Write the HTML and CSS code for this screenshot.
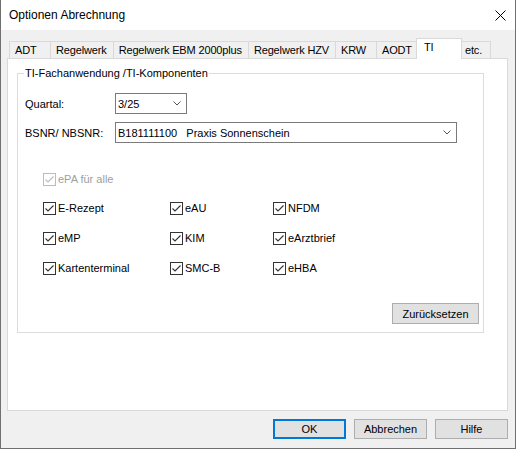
FILE: index.html
```html
<!DOCTYPE html>
<html lang="de">
<head>
    <meta charset="UTF-8">
    <meta name="viewport" content="width=device-width, initial-scale=1.0">
    <title>Optionen Abrechnung</title>
    <link rel="stylesheet" href="styles.css">
</head>
<body>
    <div class="window">
        <div class="titlebar">
            <span class="title">Optionen Abrechnung</span>
            <svg class="close" width="11" height="11" viewBox="0 0 11 11">
                <path d="M0.5 0.5 L10.5 10.5 M10.5 0.5 L0.5 10.5" stroke="#000" stroke-width="1" fill="none"/>
            </svg>
        </div>

        <div class="main">
            <div class="tabs">
                <div class="tab">ADT</div>
                <div class="tab">Regelwerk</div>
                <div class="tab">Regelwerk EBM 2000plus</div>
                <div class="tab">Regelwerk HZV</div>
                <div class="tab">KRW</div>
                <div class="tab">AODT</div>
                <div class="tab active">TI</div>
                <div class="tab narrow">etc.</div>
            </div>

            <div class="panel">
                <div class="group">
                    <span class="group-title">TI-Fachanwendung /TI-Komponenten</span>

                    <div class="field">
                        <label class="field-label">Quartal:</label>
                        <div class="combo combo-short">
                            <span class="combo-text">3/25</span>
                            <svg class="chevron" width="8" height="5" viewBox="0 0 8 5"><path d="M0.5 0.5 L4 4 L7.5 0.5" stroke="#555" fill="none"/></svg>
                        </div>
                    </div>

                    <div class="field">
                        <label class="field-label">BSNR/ NBSNR:</label>
                        <div class="combo combo-long">
                            <span class="combo-text">B181111100   Praxis Sonnenschein</span>
                            <svg class="chevron" width="8" height="5" viewBox="0 0 8 5"><path d="M0.5 0.5 L4 4 L7.5 0.5" stroke="#555" fill="none"/></svg>
                        </div>
                    </div>

                    <div class="check disabled all">
                        <span class="box"><svg width="11" height="11" viewBox="0 0 11 11"><path d="M1.5 5.5 L4 8 L9.5 2.5" fill="none"/></svg></span>
                        <span>ePA für alle</span>
                    </div>

                    <div class="check-grid">
                        <div class="check"><span class="box"><svg width="11" height="11" viewBox="0 0 11 11"><path d="M1.5 5.5 L4 8 L9.5 2.5" fill="none"/></svg></span><span>E-Rezept</span></div>
                        <div class="check"><span class="box"><svg width="11" height="11" viewBox="0 0 11 11"><path d="M1.5 5.5 L4 8 L9.5 2.5" fill="none"/></svg></span><span>eAU</span></div>
                        <div class="check"><span class="box"><svg width="11" height="11" viewBox="0 0 11 11"><path d="M1.5 5.5 L4 8 L9.5 2.5" fill="none"/></svg></span><span>NFDM</span></div>
                        <div class="check"><span class="box"><svg width="11" height="11" viewBox="0 0 11 11"><path d="M1.5 5.5 L4 8 L9.5 2.5" fill="none"/></svg></span><span>eMP</span></div>
                        <div class="check"><span class="box"><svg width="11" height="11" viewBox="0 0 11 11"><path d="M1.5 5.5 L4 8 L9.5 2.5" fill="none"/></svg></span><span>KIM</span></div>
                        <div class="check"><span class="box"><svg width="11" height="11" viewBox="0 0 11 11"><path d="M1.5 5.5 L4 8 L9.5 2.5" fill="none"/></svg></span><span>eArztbrief</span></div>
                        <div class="check"><span class="box"><svg width="11" height="11" viewBox="0 0 11 11"><path d="M1.5 5.5 L4 8 L9.5 2.5" fill="none"/></svg></span><span>Kartenterminal</span></div>
                        <div class="check"><span class="box"><svg width="11" height="11" viewBox="0 0 11 11"><path d="M1.5 5.5 L4 8 L9.5 2.5" fill="none"/></svg></span><span>SMC-B</span></div>
                        <div class="check"><span class="box"><svg width="11" height="11" viewBox="0 0 11 11"><path d="M1.5 5.5 L4 8 L9.5 2.5" fill="none"/></svg></span><span>eHBA</span></div>
                    </div>

                    <div class="group-actions">
                        <button class="btn btn-reset">Zurücksetzen</button>
                    </div>
                </div>
            </div>
        </div>

        <div class="footer">
            <button class="btn btn-default">OK</button>
            <button class="btn">Abbrechen</button>
            <button class="btn">Hilfe</button>
        </div>
    </div>
</body>
</html>
```

FILE: styles.css
```css
* {
    box-sizing: border-box;
}
body {
    margin: 0;
    font-family: "Liberation Sans", Arial, sans-serif;
    font-size: 11px;
    color: #000;
    background-color: #f0f0f0;
}
.window {
    width: 516px;
    height: 449px;
    display: flex;
    flex-direction: column;
    background-color: #f0f0f0;
    border-left: 1px solid #707070;
    border-right: 1px solid #707070;
    border-bottom: 1px solid #707070;
}
.titlebar {
    height: 30px;
    flex: none;
    background-color: white;
    display: flex;
    align-items: center;
    justify-content: space-between;
    padding: 0 9px 0 8px;
}
.title {
    font-size: 12px;
}
.close {
    margin-top: 1px;
}

/* tab control */
.main {
    flex: 1;
    display: flex;
    flex-direction: column;
    padding: 8px 7px 0 6px;
}
.tabs {
    height: 20px;
    display: flex;
    align-items: flex-end;
    padding-left: 2px;
}
.tab {
    height: 17px;
    min-width: 42px;
    padding: 0 6px 0 5px;
    line-height: 16px;
    letter-spacing: -0.15px;
    border: 1px solid #d9d9d9;
    border-bottom: none;
    background-color: #f0f0f0;
    white-space: nowrap;
    margin-left: -1px;
}
.tab:first-child {
    margin-left: 0;
}
.tab.narrow {
    min-width: 0;
    padding-left: 5px;
    width: 32px;
}
.tab.active {
    position: relative;
    z-index: 1;
    height: 21px;
    min-width: 46px;
    margin: 0 -2px -1px -3px;
    padding-left: 7px;
    background-color: white;
}
.panel {
    flex: 1;
    background-color: white;
    border: 1px solid #d9d9d9;
    padding: 14px 23px 0 9px;
}

/* group box */
.group {
    position: relative;
    border: 1px solid #dcdcdc;
    padding: 19px 4px 8px 7px;
    display: flex;
    flex-direction: column;
}
.group-title {
    position: absolute;
    top: -7px;
    left: 6px;
    padding: 0 1px;
    line-height: 13px;
    background-color: white;
}
.field {
    display: flex;
    align-items: center;
    height: 21px;
    margin-bottom: 8px;
}
.field-label {
    width: 90px;
}
.combo {
    height: 21px;
    border: 1px solid #7a7a7a;
    display: flex;
    align-items: center;
    justify-content: space-between;
    padding: 0 5px 0 2px;
    background-color: white;
}
.combo-short {
    width: 72px;
}
.combo-long {
    width: 342px;
}
.combo-text {
    white-space: pre;
}

/* checkboxes */
.check {
    display: flex;
    align-items: center;
    height: 13px;
    line-height: 13px;
}
.box {
    width: 13px;
    height: 13px;
    border: 1px solid #333;
    background-color: white;
    margin-right: 2px;
    display: flex;
}
.box path {
    stroke: #333;
    stroke-width: 1.1;
}
.check.all {
    margin: 22px 0 16px 18px;
}
.check.disabled {
    color: #a0a0a0;
}
.check.disabled .box {
    border-color: #bcbcbc;
}
.check.disabled .box path {
    stroke: #bcbcbc;
}
.check-grid {
    display: grid;
    grid-template-columns: 127px 103px 1fr;
    row-gap: 17px;
    margin-left: 18px;
}
.group-actions {
    display: flex;
    justify-content: flex-end;
    margin-top: 28px;
}

/* buttons */
.btn {
    font-family: "Liberation Sans", Arial, sans-serif;
    font-size: 11px;
    color: #000;
    background-color: #e1e1e1;
    border: 1px solid #adadad;
    height: 20px;
    width: 73px;
    padding: 0;
    margin: 0;
}
.btn-reset {
    width: 87px;
    height: 21px;
}
.btn-default {
    border: 2px solid #0078d7;
}
.footer {
    flex: none;
    display: flex;
    justify-content: flex-end;
    gap: 8px;
    padding: 8px 7px 9px 0;
}
```
